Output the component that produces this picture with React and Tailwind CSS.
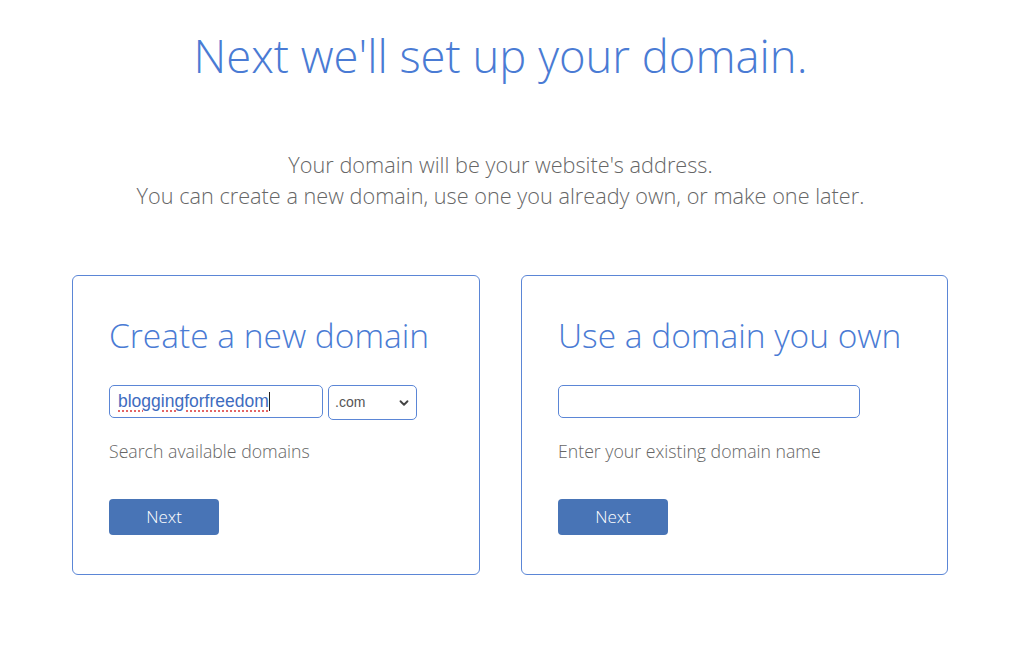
import { ChevronDown } from 'lucide-react';

const open = { fontFamily: '"Open Sans", "Noto Sans", sans-serif' };
const arial = { fontFamily: '"Liberation Sans", Arial, sans-serif' };

function Card({ title, width, helper, children }) {
  return (
    <div className={`${width} h-[300px] border border-[#5b86d6] rounded-[6px] pl-[36px] pt-[39px] bg-white`}>
      <h2 className="text-[33.5px] leading-[40px] font-light text-[#4a7bd4] whitespace-nowrap" style={open}>
        {title}
      </h2>
      <div className="mt-[30px] h-[35px] flex items-start gap-[5px]">{children}</div>
      <p className="mt-[19px] text-[17.7px] leading-[24px] text-[#666] font-light" style={open}>
        {helper}
      </p>
      <button
        className="mt-[36px] w-[110px] h-[36px] rounded-[4px] bg-[#4874b6] text-white text-[17px] font-light"
        style={open}
      >
        Next
      </button>
    </div>
  );
}

export default function App() {
  return (
    <div className="w-full min-h-[650px] bg-white flex flex-col items-center pt-[28px]">
      <div className="mr-[23px] flex flex-col items-center">
        <h1 className="text-[45.4px] leading-[55px] font-light text-[#4a7bd4]" style={open}>
          Next we'll set up your domain.
        </h1>
        <div className="mt-[66px] text-center text-[21.7px] leading-[31px] text-[#666] font-light" style={open}>
          <p>Your domain will be your website's address.</p>
          <p>You can create a new domain, use one you already own, or make one later.</p>
        </div>
      </div>

      <div className="mt-[64px] flex gap-[41px] ml-[-4px]">
        <Card title="Create a new domain" width="w-[408px]" helper="Search available domains">
          <div className="w-[214px] h-[33px] border border-[#5b86d6] rounded-[5px] flex items-center pl-[8px]">
            <span
              className="text-[17.5px] text-[#3e6cc0] underline decoration-dotted decoration-[#e05050] underline-offset-[3px]"
              style={arial}
            >
              bloggingforfreedom
            </span>
            <span className="w-px h-[19px] bg-[#222]" />
          </div>
          <div className="w-[89px] h-[35px] border border-[#5b86d6] rounded-[5px] flex items-center justify-between pl-[6px] pr-[5px]">
            <span className="text-[14px] text-[#555]" style={arial}>.com</span>
            <ChevronDown size={14} strokeWidth={3.2} className="text-[#444]" />
          </div>
        </Card>

        <Card title="Use a domain you own" width="w-[427px]" helper="Enter your existing domain name">
          <div className="w-[302px] h-[33px] border border-[#5b86d6] rounded-[5px]" />
        </Card>
      </div>
    </div>
  );
}
